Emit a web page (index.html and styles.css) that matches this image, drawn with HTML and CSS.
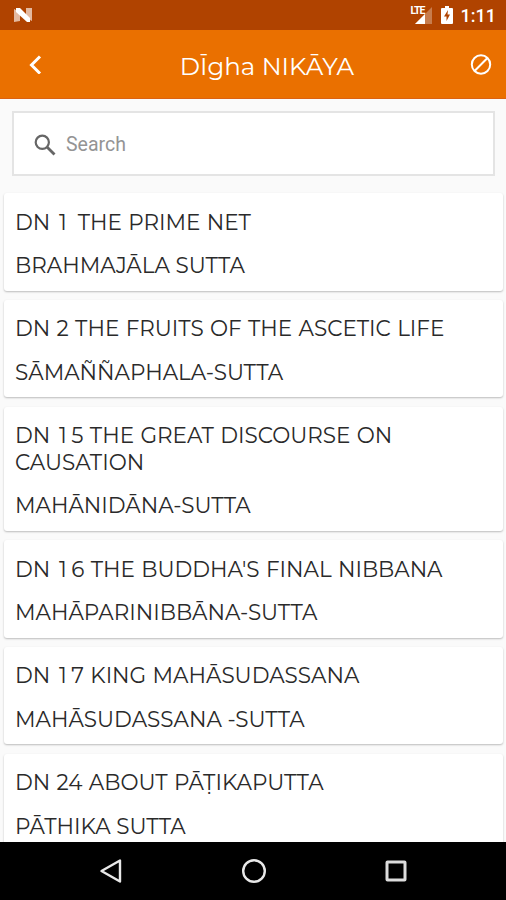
FILE: index.html
```html
<!DOCTYPE html>
<html lang="en">
<head>
    <meta charset="UTF-8">
    <meta name="viewport" content="width=device-width, initial-scale=1.0">
    <title>DĪgha NIKĀYA</title>
    <link rel="stylesheet" href="styles.css">
</head>
<body>
    <div class="status-bar">
        <svg class="logo" width="20" height="16" viewBox="0 0 20 16">
            <path d="M1 2L7 5V14L1 15ZM13 1H19V14L13 11Z" fill="#e3b9a0"/>
            <path d="M3 1H7L17 11V15H14L3 5Z" fill="#fff"/>
        </svg>
        <div class="status-icons">
            <div class="signal">
                <span class="lte">LTE</span>
                <svg width="17" height="17" viewBox="0 0 17 17">
                    <path d="M17 0V17H0Z" fill="#c77c4d"/>
                    <path d="M10 7V17H0Z" fill="#fff"/>
                </svg>
            </div>
            <svg class="battery" width="12" height="18" viewBox="0 0 12 18">
                <path d="M4 0H8V2H11Q12 2 12 3V17Q12 18 11 18H1Q0 18 0 17V3Q0 2 1 2H4Z" fill="#fff"/>
                <path d="M7 4L3 10.5H5.5V15L9 8.5H6.5Z" fill="#b04300"/>
            </svg>
            <span class="time">1:11</span>
        </div>
    </div>

    <div class="header">
        <svg width="14" height="20" viewBox="0 0 14 20" fill="none" stroke="#fff" stroke-width="3">
            <path d="M12 2.5L3.5 11L12 19.5"/>
        </svg>
        <h1>DĪgha NIKĀYA</h1>
        <svg width="22" height="22" viewBox="0 0 22 22" fill="none" stroke="#fff" stroke-width="2">
            <circle cx="11" cy="11.5" r="9.2"/>
            <path d="M4.8 17.7L17.2 5.3"/>
        </svg>
    </div>

    <div class="content">
        <div class="search">
            <svg width="22" height="22" viewBox="0 0 22 22" fill="none" stroke="#666" stroke-width="2.2">
                <circle cx="8.3" cy="8.3" r="6.6"/>
                <path d="M13 13L20.5 20.5" stroke-width="2.8"/>
            </svg>
            <span>Search</span>
        </div>

        <div class="card">
            <p class="title">DN <span class="one">1</span> THE PRIME NET</p>
            <p>BRAHMAJĀLA SUTTA</p>
        </div>
        <div class="card">
            <p class="title">DN 2 THE FRUITS OF THE ASCETIC LIFE</p>
            <p>SĀMAÑÑAPHALA-SUTTA</p>
        </div>
        <div class="card">
            <p class="title">DN <span class="one">1</span>5 THE GREAT DISCOURSE ON<br>CAUSATION</p>
            <p>MAHĀNIDĀNA-SUTTA</p>
        </div>
        <div class="card">
            <p class="title">DN <span class="one">1</span>6 THE BUDDHA'S FINAL NIBBANA</p>
            <p>MAHĀPARINIBBĀNA-SUTTA</p>
        </div>
        <div class="card">
            <p class="title">DN <span class="one">1</span>7 KING MAHĀSUDASSANA</p>
            <p>MAHĀSUDASSANA -SUTTA</p>
        </div>
        <div class="card">
            <p class="title">DN 24 ABOUT PĀṬIKAPUTTA</p>
            <p>PĀTHIKA SUTTA</p>
        </div>
    </div>

    <div class="nav-bar">
        <svg width="24" height="26" viewBox="0 0 24 26" fill="none" stroke="#e8e8e8" stroke-width="2.4" stroke-linejoin="round">
            <path d="M21 2.5V23.5L2.5 13Z"/>
        </svg>
        <svg width="26" height="26" viewBox="0 0 26 26" fill="none" stroke="#e8e8e8" stroke-width="2.4">
            <circle cx="13" cy="13" r="10.8"/>
        </svg>
        <svg width="22" height="22" viewBox="0 0 22 22" fill="none" stroke="#dcdcdc" stroke-width="3">
            <rect x="2" y="2" width="18" height="18" rx="0.5"/>
        </svg>
    </div>
</body>
</html>
```
FILE: styles.css
```css
* { box-sizing: border-box; }
body { margin: 0; height: 900px; display: flex; flex-direction: column; overflow: hidden; background-color: #fafafa; font-family: Montserrat, Inter, sans-serif; }
.status-bar { flex: none; height: 30px; padding: 0 10px 0 13px; display: flex; align-items: center; justify-content: space-between; background-color: #b04300; color: white; }
.status-icons { display: flex; align-items: center; }
.signal { position: relative; width: 21px; height: 18px; display: flex; align-items: flex-end; justify-content: flex-end; }
.lte { position: absolute; left: 0; top: 0; font: bold 10.5px/9px Roboto, sans-serif; letter-spacing: -1px; }
.battery { margin: 0 8px 0 9px; }
.time { padding-top: 2px; font: 500 18px/28px Roboto, sans-serif; }
.header { flex: none; height: 69px; padding: 0 14px 0 28px; display: flex; align-items: center; justify-content: space-between; background-color: #ea7000; border-bottom: 1px solid #dc6212; color: white; }
h1 { margin: 3px 0 0 22px; font-size: 24.5px; font-weight: 400; line-height: 30px; }
.content { flex: 1; min-height: 0; overflow: hidden; padding: 12px 3px 0 4px; }
.search { height: 65px; margin: 0 8px 17px; padding: 2px 20px 0; display: flex; align-items: center; gap: 10px; background-color: white; border: 2px solid #e4e4e4; color: #949494; font: 19.5px Roboto, sans-serif; }
.card { margin-bottom: 9.2px; padding: 15.5px 11px 11.7px; background-color: white; border-radius: 3px; box-shadow: 0 1px 2px rgba(0, 0, 0, 0.25); }
.card p { margin: 0; font-size: 21.5px; font-weight: 400; line-height: 26.7px; color: #2a2a2a; white-space: nowrap; }
.card .title { margin-bottom: 17px; word-spacing: 0.7px; }
.one { padding: 0 4.5px 0 2.5px; }
.nav-bar { flex: none; height: 58px; padding: 0 99px; display: flex; align-items: center; justify-content: space-between; background-color: black; }
```
